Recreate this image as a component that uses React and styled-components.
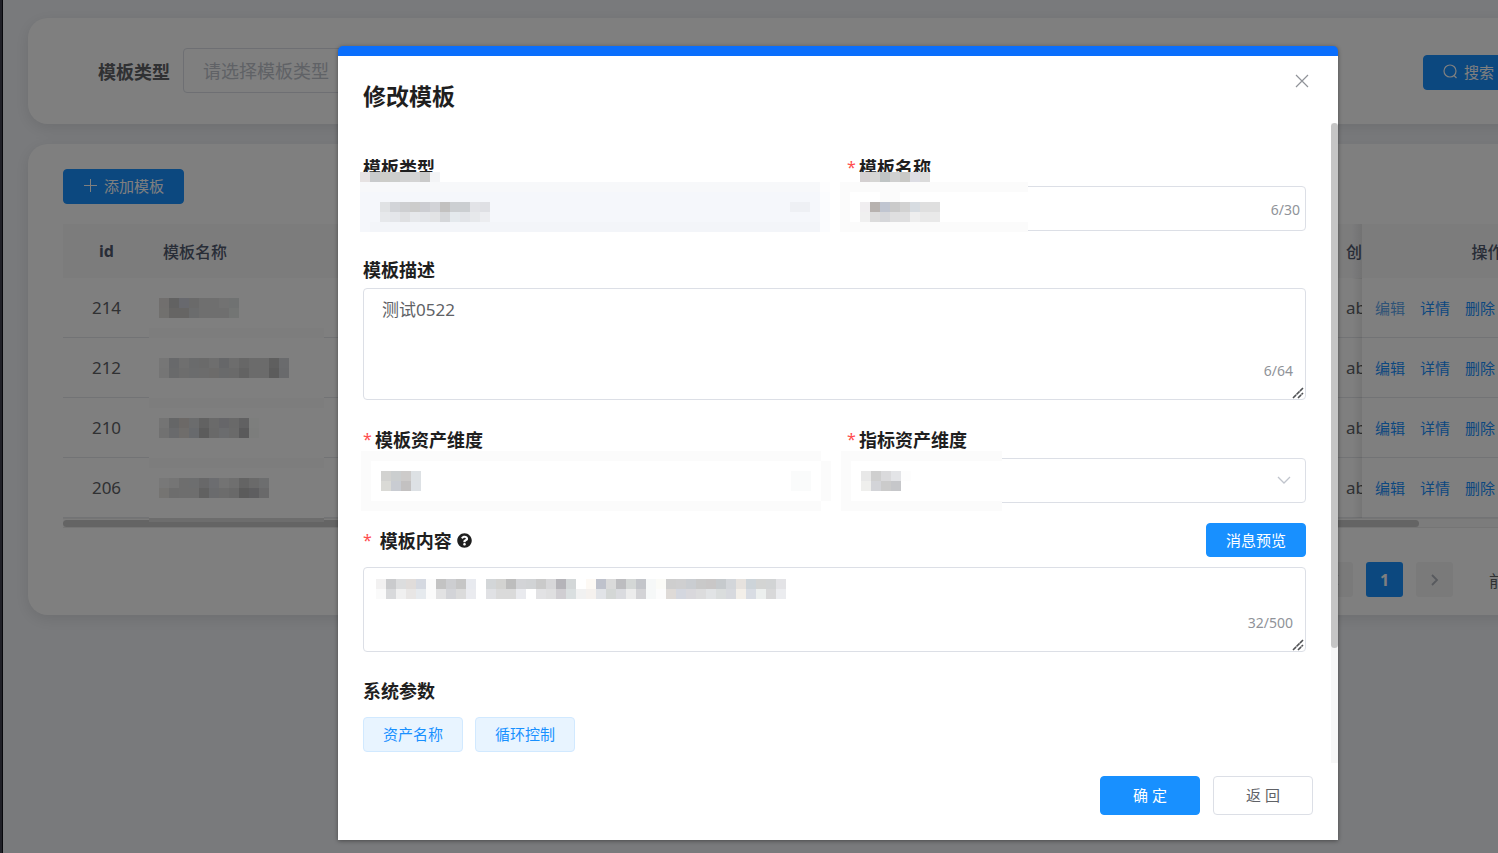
import styled, { createGlobalStyle, css } from "styled-components"
import { FaQuestionCircle } from "react-icons/fa"

const GlobalStyle = createGlobalStyle`
  * {
    box-sizing: border-box;
  }

  body {
    margin: 0;
    overflow: hidden;
    font-family: "Noto Sans", "Noto Sans CJK SC", sans-serif;
    font-size: 17px;
    color: #606266;
  }

  button, input, select, textarea {
    font-family: inherit;
    margin: 0;
  }
`

const Shell = styled.div`
  position: relative;
  display: flex;
  min-width: 1676px;
  min-height: 100vh;
  background: #f3f5f9;
`

const Sidebar = styled.aside`
  width: 3px;
  background: #40404e;
  border-right: 1px solid #101018;
`

const Main = styled.main`
  flex: 1;
  display: flex;
  flex-direction: column;
  gap: 20px;
  padding: 18px 28px 18px 25px;
`

const Card = styled.section`
  background: #fff;
  border-radius: 20px;
  box-shadow: 0 4px 16px rgba(0, 0, 0, 0.1);
  padding: ${({ $padding }) => $padding};
`

const SearchForm = styled.form`
  display: flex;
  justify-content: space-between;
  align-items: center;
`

const SearchField = styled.div`
  display: flex;
  align-items: center;
  gap: 13px;
  padding-left: 35px;
`

const SearchLabel = styled.label`
  font-size: 18px;
  font-weight: 700;
`

const controlStyle = css`
  width: 100%;
  height: 45px;
  padding: 0 19px;
  border: 1px solid #dcdfe6;
  border-radius: 4px;
  background: #fff;
  color: #606266;
  font-size: 17px;
  outline: none;
`

const Select = styled.select`
  ${controlStyle}
  display: block;
  appearance: none;

  &:disabled {
    background: #f5f7fa;
    opacity: 1;
  }
`

const SearchSelect = styled(Select)`
  width: 300px;
  color: #c0c4cc;
  font-size: 18px;
`

const ButtonGroup = styled.div`
  display: flex;
  gap: ${({ $gap }) => $gap || "8px"};
`

const SearchButtons = styled(ButtonGroup)`
  padding-top: 4px;
`

const Button = styled.button`
  display: inline-flex;
  align-items: center;
  justify-content: center;
  gap: 6px;
  height: ${({ $height }) => $height || "35px"};
  min-width: ${({ $width }) => $width || "91px"};
  padding: 0 18px 2px;
  border: 1px solid #dcdfe6;
  border-radius: 4px;
  background: #fff;
  color: #606266;
  font-size: 15px;
  white-space: nowrap;
  cursor: pointer;

  ${({ $kind }) => $kind === "primary" && css`
    background: #1890ff;
    border-color: #1890ff;
    color: #fff;
  `}

  ${({ $kind }) => $kind === "plain" && css`
    background: #e8f4ff;
    border-color: #d1e9ff;
    color: #1890ff;
  `}
`

const TableBox = styled.div`
  margin-top: 20px;
`

const Table = styled.table`
  width: 100%;
  table-layout: fixed;
  border-collapse: separate;
  border-spacing: 0;
`

const IdCol = styled.col`
  width: 87px;
`

const CreatorCol = styled.col`
  width: 29px;
`

const ActionCol = styled.col`
  width: 251px;
`

const HeadCell = styled.th`
  position: relative;
  height: 54px;
  padding: 0 0 0 ${({ $align }) => ($align === "center" ? "0" : "13px")};
  background: #f8f8f9;
  color: #515a6e;
  font-size: 16px;
  font-weight: ${({ $strong }) => ($strong ? 700 : 500)};
  text-align: ${({ $align }) => $align || "left"};
  white-space: nowrap;
  overflow: hidden;
`

const Cell = styled.td`
  position: relative;
  height: 60px;
  padding: 0 0 0 ${({ $align }) => ($align === "center" ? "0" : "13px")};
  border-bottom: 1px solid #e4e6ea;
  text-align: ${({ $align }) => $align || "left"};
  white-space: nowrap;
  overflow: ${({ $clip }) => ($clip ? "hidden" : "visible")};
`

const fixedShade = css`
  overflow: visible;

  &:before {
    content: '';
    position: absolute;
    top: 0;
    bottom: -1px;
    left: -10px;
    width: 10px;
    background: linear-gradient(to left, rgba(0, 0, 0, 0.08), rgba(0, 0, 0, 0));
  }
`

const FixedHeadCell = styled(HeadCell)`
  ${fixedShade}
`

const FixedCell = styled(Cell)`
  ${fixedShade}
`

const Actions = styled.div`
  display: flex;
  gap: 15px;
`

const ActionLink = styled.a`
  color: ${({ $faded }) => ($faded ? "#5ca6ee" : "#1890ff")};
  font-size: 15px;
  text-decoration: none;
`

const TableScroll = styled.div`
  height: 10px;
  padding: 1px 0;
  background: #f9f9f9;
  border-top: 1px solid #ebebeb;
  border-bottom: 1px solid #ebebeb;
`

const TableThumb = styled.div`
  width: 87.5%;
  height: 7px;
  border-radius: 4px;
  background: #c8c8c8;
`

const Pagination = styled.nav`
  display: flex;
  justify-content: flex-end;
  align-items: center;
  gap: 13px;
  margin-top: 34px;
`

const PageButton = styled.button`
  display: flex;
  align-items: center;
  justify-content: center;
  width: 37px;
  height: 35px;
  padding: 0;
  border: 0;
  border-radius: 3px;
  background: ${({ $active }) => ($active ? "#1890ff" : "#f4f4f5")};
  color: ${({ $active }) => ($active ? "#fff" : "#b0b4bc")};
  font-size: 16px;
  font-weight: 700;
`

const Jumper = styled.label`
  display: flex;
  align-items: center;
  gap: 8px;
  width: 124px;
  margin-left: 23px;
  font-size: 16px;
  white-space: nowrap;
`

const JumperInput = styled.input`
  width: 60px;
  height: 35px;
  border: 1px solid #dcdfe6;
  border-radius: 4px;
  text-align: center;
`

const Mask = styled.div`
  position: absolute;
  inset: 0;
  z-index: 10;
  display: flex;
  justify-content: center;
  align-items: flex-start;
  padding-top: 46px;
  background: rgba(0, 0, 0, 0.5);
`

const Dialog = styled.div`
  width: 1000px;
  max-width: 90%;
  border-top: 10px solid #0a6efc;
  border-radius: 5px 5px 0 0;
  background: #fff;
  box-shadow: 0 1px 4px rgba(0, 0, 0, 0.4);
`

const DialogHeader = styled.header`
  display: flex;
  justify-content: space-between;
  align-items: flex-start;
  height: 67px;
  padding: 17px 28px 0 25px;
`

const DialogTitle = styled.h2`
  margin: 6px 0 0;
  color: #1f1f1f;
  font-size: 23px;
  font-weight: 700;
  line-height: 34px;
`

const CloseButton = styled.button`
  display: flex;
  padding: 1px;
  border: 0;
  background: none;
  color: #909399;
  cursor: pointer;
`

const DialogBody = styled.div`
  display: flex;
`

const DialogForm = styled.form`
  flex: 1;
  padding: 32px 25px 11px;
`

const ScrollTrack = styled.div`
  width: 7px;
  background: #f7f7f7;
`

const ScrollThumb = styled.div`
  height: 82%;
  border-radius: 4px;
  background: #c5c5c5;
`

const Row = styled.div`
  display: grid;
  grid-template-columns: ${({ $columns }) => ($columns === 2 ? "1fr 1fr" : "1fr")};
  column-gap: 25px;
  margin-top: ${({ $top }) => $top || "0"};
`

const Field = styled.div`
  position: relative;
`

const Label = styled.label`
  display: flex;
  align-items: center;
  gap: 5px;
  height: 24px;
  margin-bottom: ${({ $bottom }) => $bottom || "7px"};
  color: #1f1f1f;
  font-size: 18px;
  font-weight: 700;
`

const LabelRow = styled.div`
  display: flex;
  justify-content: space-between;
  align-items: center;
  height: 34px;
  margin-bottom: 10px;
`

const Star = styled.span`
  width: 7px;
  color: #ff4d4f;
  font-size: 16px;
  font-weight: 400;
`

const ControlBox = styled.div`
  position: relative;
`

const TextInput = styled.input`
  ${controlStyle}
  display: block;
`

const TextArea = styled.textarea`
  ${controlStyle}
  display: block;
  height: ${({ $height }) => $height};
  padding: 8px 18px;
  line-height: 26px;
  resize: none;
`

const Counter = styled.span`
  position: absolute;
  right: ${({ $area }) => ($area ? "13px" : "6px")};
  bottom: ${({ $area }) => ($area ? "19px" : "11px")};
  color: #909399;
  font-size: 14px;
  line-height: 20px;
`

const Grip = styled.svg`
  position: absolute;
  right: 2px;
  bottom: 1px;
`

const Arrow = styled.svg`
  position: absolute;
  top: 18px;
  right: 15px;
`

const Patch = styled.svg`
  position: absolute;
  top: ${({ $top }) => $top}px;
  left: ${({ $left }) => $left}px;
  z-index: 1;
  pointer-events: none;
`

const DialogFooter = styled.footer`
  display: flex;
  justify-content: flex-end;
  gap: 13px;
  padding: 13px 25px 25px;
`

// areas: [x, y, width, height, color], rows: [x, y, "color color ..."] in 10px blocks
const Mosaic = ({ top, left, width, height, areas = [], rows = [] }) => (
  <Patch
    $top={top}
    $left={left}
    width={width}
    height={height}
    shapeRendering="crispEdges"
    aria-hidden="true"
  >
    {areas.map(([x, y, w, h, fill]) => (
      <rect key={`${x}-${y}-${w}`} x={x} y={y} width={w} height={h} fill={`#${fill}`} />
    ))}
    {rows.map(([x, y, colors]) =>
      colors.split(" ").map((color, i) => (
        <rect key={`${x}-${y}-${i}`} x={x + i * 10} y={y} width="10" height="10" fill={`#${color}`} />
      ))
    )}
  </Patch>
)

const records = [
  {
    id: 214,
    areas: [[0, 50, 175, 10, "fafafa"]],
    rows: [
      [10, 20, "e2dedc c4c4c4 d0d2dc d4d4d4 dedede dedede e4e4e4 e0e4e4"],
      [10, 30, "e2e0dc cccac8 cccac8 d6d8da dedede dedede dedede e6eae8"],
    ],
  },
  {
    id: 212,
    areas: [[0, 50, 175, 10, "ffffff"]],
    rows: [
      [10, 20, "ececec d0d2d6 dedede d4d6d8 d4d4d4 dcdcdc ccced2 dadada cecece d6d6d6 d6d6d6 bebebe d4d6da"],
      [10, 30, "eaeaea d2d4d6 dadada d6d8da d8d8d8 d8d6d4 d2d4d6 d4d4d4 c6c6c6 d6d6d6 d6d6d6 b8b8b8 d2d4d8"],
    ],
  },
  {
    id: 210,
    areas: [
      [0, 0, 175, 10, "fafafa"],
      [0, 50, 175, 10, "ffffff"],
    ],
    rows: [
      [10, 20, "e8e8e8 cacccf d8d2ce d6d8da c4c4c4 d4d4d4 cccdd2 d2d2d2 c2c2c4 fafcfa"],
      [10, 30, "e2e2e2 d2d4d8 dedad6 d0d4da b8b8b8 d2d2d2 d6d8dc d4d4d4 b4b4b6 f8faf8"],
    ],
  },
  {
    id: 206,
    areas: [
      [0, 0, 175, 10, "fafafa"],
      [0, 50, 175, 10, "ffffff"],
      [0, 60, 175, 4, "dadada"],
    ],
    rows: [
      [10, 20, "f0f0f0 eaeaea dcdcdc dadcde d0d0d2 d8dae0 e6e6e6 dedede c8c8c8 d4d4d4 dadcde"],
      [10, 30, "eae8e4 dadada dcdcdc dcdcdc c2c2c2 d4d6da d8d8d8 d2d2d2 b6b6b6 bcbcc0 d2d2d4"],
    ],
  },
]

const PlusIcon = () => (
  <svg width="15" height="15" viewBox="0 0 15 15" stroke="currentColor" fill="none">
    <path d="M7.5 1v13M1 7.5h13" />
  </svg>
)

const SearchIcon = () => (
  <svg width="15" height="15" viewBox="0 0 15 15" stroke="currentColor" strokeWidth="1.2" fill="none">
    <circle cx="7" cy="7" r="6" />
    <path d="M11 11.5l2.5 2.5" />
  </svg>
)

const ChevronIcon = ({ left }) => (
  <svg width="14" height="14" viewBox="0 0 14 14" stroke="currentColor" strokeWidth="1.8" fill="none">
    <path d={left ? "M10 2L5 7l5 5" : "M4 2l5 5-5 5"} />
  </svg>
)

const ResizeGrip = () => (
  <Grip width="12" height="12" viewBox="0 0 12 12" stroke="#505255" strokeWidth="1.6" aria-hidden="true">
    <path d="M1 11L11 1M6 11l5-5" strokeDasharray="4.4 0.5" />
  </Grip>
)

const TemplateList = () => (
  <Card $padding="25px 35px 18px">
    <Button type="button" $kind="primary" $width="121px">
      <PlusIcon />
      添加模板
    </Button>
    <TableBox>
      <Table>
        <colgroup>
          <IdCol />
          <col />
          <CreatorCol />
          <ActionCol />
        </colgroup>
        <thead>
          <tr>
            <HeadCell $align="center" $strong>id</HeadCell>
            <HeadCell>模板名称</HeadCell>
            <HeadCell>创建人</HeadCell>
            <FixedHeadCell $align="center">操作</FixedHeadCell>
          </tr>
        </thead>
        <tbody>
          {records.map((record, i) => (
            <tr key={record.id}>
              <Cell $align="center">{record.id}</Cell>
              <Cell>
                <Mosaic top={0} left={-1} width={175} height={64} areas={record.areas} rows={record.rows} />
              </Cell>
              <Cell $clip>ab</Cell>
              <FixedCell>
                <Actions>
                  <ActionLink href="#edit" $faded={i === 0}>编辑</ActionLink>
                  <ActionLink href="#detail">详情</ActionLink>
                  <ActionLink href="#delete">删除</ActionLink>
                </Actions>
              </FixedCell>
            </tr>
          ))}
        </tbody>
      </Table>
      <TableScroll>
        <TableThumb />
      </TableScroll>
    </TableBox>
    <Pagination aria-label="分页">
      <PageButton type="button" aria-label="上一页">
        <ChevronIcon left />
      </PageButton>
      <PageButton type="button" $active>1</PageButton>
      <PageButton type="button" aria-label="下一页">
        <ChevronIcon />
      </PageButton>
      <Jumper>
        前往
        <JumperInput defaultValue="1" />
        页
      </Jumper>
    </Pagination>
  </Card>
)

const EditDialog = () => (
  <Dialog role="dialog" aria-labelledby="dialog-title">
    <DialogHeader>
      <DialogTitle id="dialog-title">修改模板</DialogTitle>
      <CloseButton type="button" aria-label="关闭">
        <svg width="14" height="14" viewBox="0 0 14 14" stroke="currentColor" strokeWidth="1.2">
          <path d="M1 1l12 12M13 1L1 13" />
        </svg>
      </CloseButton>
    </DialogHeader>
    <DialogBody>
      <DialogForm id="template-form">
        <Row $columns={2}>
          <Field>
            <Label htmlFor="type">模板类型</Label>
            <Select id="type" disabled />
            <Mosaic
              top={17}
              left={-3}
              width={470}
              height={60}
              areas={[
                [0, 0, 470, 10, "ffffff"],
                [0, 10, 460, 10, "f7f8fa"],
                [460, 10, 10, 10, "fdfdfe"],
                [0, 20, 460, 40, "f5f7fb"],
                [460, 20, 10, 40, "fbfcfe"],
                [10, 50, 450, 10, "f3f5f9"],
                [430, 30, 20, 10, "eef0f4"],
              ]}
              rows={[
                [0, 0, "e6e2e2 c8cacc ccccc8 cccecc d2d2d2 d4d4d4 cacaca f3f4f6"],
                [20, 30, "e0e2e4 d2d4d8 cecfd1 cccccb cccdd2 d2d3d7 c2c1c0 cccfd2 cbced1 e2e3e7 dfe0e4"],
                [20, 40, "e6e8eb e4e6ea dfe0e2 e6e8eb e3e5e9 e2e3e5 d5d7da e4e9ed e2e4e8 e6e8eb ecedf0"],
              ]}
            />
          </Field>
          <Field>
            <Label htmlFor="name">
              <Star>*</Star>
              模板名称
            </Label>
            <ControlBox>
              <TextInput id="name" />
              <Counter>6/30</Counter>
            </ControlBox>
            <Mosaic
              top={17}
              left={-7}
              width={188}
              height={60}
              areas={[
                [0, 0, 188, 60, "ffffff"],
                [0, 10, 188, 10, "fbfbfb"],
                [0, 20, 10, 30, "fbfbfb"],
                [0, 50, 188, 10, "fbfbfb"],
                [40, 20, 20, 10, "fbfbfb"],
              ]}
              rows={[
                [20, 0, "d4d0d1 d6d6d4 bfc4c4 d0d0d0 c9c9c6 dddde4 dbdbdb"],
                [20, 30, "f0eef0 b7b2af c0c5d0 cacaca d2d2d2 d7dce1 dfdfdf dfdfdf"],
                [20, 40, "f0f0f0 dcdcdc d6d7da dfdfe0 dfdfe0 eeeeee e9e9e9 e9e9e9"],
              ]}
            />
          </Field>
        </Row>
        <Row $top="26px">
          <Field>
            <Label htmlFor="description">模板描述</Label>
            <ControlBox>
              <TextArea id="description" $height="112px" defaultValue="测试0522" />
              <Counter $area>6/64</Counter>
              <ResizeGrip />
            </ControlBox>
          </Field>
        </Row>
        <Row $columns={2} $top="27px">
          <Field>
            <Label htmlFor="template-dimension">
              <Star>*</Star>
              模板资产维度
            </Label>
            <Select id="template-dimension" />
            <Mosaic
              top={24}
              left={-2}
              width={470}
              height={60}
              areas={[
                [0, 0, 470, 60, "fbfbfb"],
                [10, 10, 450, 40, "ffffff"],
                [460, 0, 10, 10, "ffffff"],
                [460, 50, 10, 10, "ffffff"],
                [430, 20, 20, 20, "fafbfb"],
              ]}
              rows={[
                [20, 20, "d2d2d0 cbcecf cdcbca dde1e4"],
                [20, 30, "dadad6 c9ccd2 c3c1c1 dde1e5"],
              ]}
            />
          </Field>
          <Field>
            <Label htmlFor="metric-dimension">
              <Star>*</Star>
              指标资产维度
            </Label>
            <ControlBox>
              <Select id="metric-dimension" />
              <Arrow width="14" height="9" viewBox="0 0 14 9" fill="none" stroke="#c0c4cc" strokeWidth="1.3">
                <path d="M1 1l6 6 6-6" />
              </Arrow>
            </ControlBox>
            <Mosaic
              top={24}
              left={-6}
              width={161}
              height={60}
              areas={[
                [0, 0, 161, 60, "fbfbfb"],
                [10, 10, 151, 40, "ffffff"],
              ]}
              rows={[
                [20, 20, "e8e8e8 cfcfcf dadadc e3e4e7 fdfdfd"],
                [20, 30, "efefed d3d4d8 cbcbcb c6c7ca"],
              ]}
            />
          </Field>
        </Row>
        <Row $top="20px">
          <Field>
            <LabelRow>
              <Label htmlFor="content" $bottom="0">
                <Star>*</Star>
                &nbsp;模板内容
                <FaQuestionCircle size={15} />
              </Label>
              <Button type="button" $kind="primary" $width="100px" $height="34px">消息预览</Button>
            </LabelRow>
            <ControlBox>
              <TextArea id="content" $height="85px" />
              <Counter $area>32/500</Counter>
              <ResizeGrip />
              <Mosaic
                top={12}
                left={13}
                width={410}
                height={20}
                rows={[
                  [0, 0, "f2f1f1 cacbcd dcddde e0dcda d5d9e1 fbfbfb c3c3c3 cdced1 c6c6c6 e8eaef ffffff d3d6d8 d3d3d1 bdbdbd d3d4d7 d1d3d5 cacaca d7d7d9 b5b4b9 d3d7d8 ffffff fdf9f4 bfc2cc dadada bdbdc0 d4d7d6 c3c5ca f6f8f8 fbfbf7 cecece cfcfd0 cacdd1 c9c9c9 c9c7c7 c6cacd d3d6da e6e2de cdd4d9 d3d4d3 d2d4d5 e3e3e6"],
                  [0, 10, "fafafa d8d9db f0f0f0 e8e6e5 e6eaee fbfbfb e2e2e3 d3d4d8 dbdbdb eaebef ffffff e0e1e4 dadada dadada e9eaee ffffff e2e2e4 dfdfe0 d0ced2 dadfe0 f1f1f1 f5f1ee e1e3e7 d4d7d6 dadbdf ececec d3d3d6 f6f8f8 fcfcfc dedad7 d4d7df d9d8dc dcdcdd e1e3e5 dadddd d7d9de f3efe9 d8dce3 ecefee d8d8d9 ebecef"],
                ]}
              />
            </ControlBox>
          </Field>
        </Row>
        <Row $top="26px">
          <Field>
            <Label as="div" $bottom="15px">系统参数</Label>
            <ButtonGroup $gap="12px">
              <Button type="button" $kind="plain" $width="100px">资产名称</Button>
              <Button type="button" $kind="plain" $width="100px">循环控制</Button>
            </ButtonGroup>
          </Field>
        </Row>
      </DialogForm>
      <ScrollTrack>
        <ScrollThumb />
      </ScrollTrack>
    </DialogBody>
    <DialogFooter>
      <Button type="submit" form="template-form" $kind="primary" $width="100px" $height="39px">确 定</Button>
      <Button type="button" $width="100px" $height="39px">返 回</Button>
    </DialogFooter>
  </Dialog>
)

const App = () => {
  return (
    <>
      <GlobalStyle />
      <Shell>
        <Sidebar />
        <Main>
          <Card $padding="30px 35px 31px">
            <SearchForm>
              <SearchField>
                <SearchLabel htmlFor="search-type">模板类型</SearchLabel>
                <SearchSelect id="search-type">
                  <option>请选择模板类型</option>
                </SearchSelect>
              </SearchField>
              <SearchButtons>
                <Button type="button" $kind="primary">
                  <SearchIcon />
                  搜索
                </Button>
                <Button type="reset">重置</Button>
              </SearchButtons>
            </SearchForm>
          </Card>
          <TemplateList />
        </Main>
        <Mask>
          <EditDialog />
        </Mask>
      </Shell>
    </>
  )
}

export default App
